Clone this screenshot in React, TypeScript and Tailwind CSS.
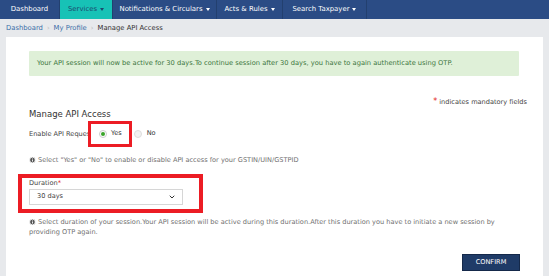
import { ChevronDown, Info } from "lucide-react";

const navItems = [
  { label: "Dashboard", caret: false, w: "w-[60px]" },
  { label: "Services", caret: true, w: "w-[53px]", active: true },
  { label: "Notifications & Circulars", caret: true, w: "w-[104px]" },
  { label: "Acts & Rules", caret: true, w: "w-[66px]" },
  { label: "Search Taxpayer", caret: true, w: "w-[84px]" },
];

function Caret() {
  return <span className="ml-[3px] inline-block h-0 w-0 border-x-[2.5px] border-t-[3px] border-x-transparent border-t-current align-middle" />;
}

function HelpText({ children }: { children: React.ReactNode }) {
  return (
    <p className="text-[6.6px] leading-[10px] text-[#707070]">
      <Info className="mr-[2px] inline-block h-[7px] w-[7px] -translate-y-[0.5px] fill-[#555] text-white" strokeWidth={3} />
      {children}
    </p>
  );
}

export default function App() {
  return (
    <div className="flex h-[276px] w-[549px] flex-col overflow-hidden bg-[#e7e9ec]" style={{ fontFamily: '"DejaVu Sans", Verdana, sans-serif' }}>
      {/* top nav */}
      <nav className="flex h-[19px] shrink-0 bg-[#2b4c85] text-[6.9px] text-white">
        {navItems.map((n) => (
          <div
            key={n.label}
            className={`flex ${n.w} items-center justify-center border-r border-[#23406f] ${n.active ? "bg-[#17c2b6] text-[#1c4a6e]" : ""}`}
          >
            {n.label}
            {n.caret && <Caret />}
          </div>
        ))}
      </nav>

      {/* breadcrumb */}
      <div className="flex h-[18px] shrink-0 items-center gap-[4px] px-[6px] text-[6.8px]">
        <span className="text-[#3b6fa8]">Dashboard</span>
        <span className="text-[#bbb]">›</span>
        <span className="text-[#3b6fa8]">My Profile</span>
        <span className="text-[#bbb]">›</span>
        <span className="text-[#333]">Manage API Access</span>
      </div>

      <div className="flex-1 px-[6px]">
        <div className="relative h-full bg-white pl-[23px] pr-[16px] pt-[14px]">
          <div className="flex h-[25px] w-[490px] items-center rounded-[1px] bg-[#dff0d8] pl-[8px] text-[6.7px] text-[#3c763d]">
            Your API session will now be active for 30 days.To continue session after 30 days, you have to again authenticate using OTP.
          </div>

          <p className="mt-[21px] text-right text-[6.6px] leading-[10px] text-[#444]">
            <span className="text-[8px] text-[#e2231a]">*</span> indicates mandatory fields
          </p>

          <h2 className="mt-[1px] text-[8.5px] leading-[12px] text-[#333]">Manage API Access</h2>

          <div className="mt-[10px] flex h-[10px] items-center text-[6.6px] text-[#444]">
            <span>Enable API Requests</span>
          </div>

          <div className="mt-[15px]">
            <HelpText>Select "Yes" or "No" to enable or disable API access for your GSTIN/UIN/GSTPID</HelpText>
          </div>

          <label className="mt-[13px] block text-[6.6px] leading-[10px] text-[#444]">
            Duration<span className="text-[#e2231a]">*</span>
          </label>
          <div className="mt-[1px] flex h-[16px] w-[154px] items-center justify-between border border-[#d6d6d6] pl-[7px] pr-[6px] text-[6.6px] text-[#444]">
            30 days
            <ChevronDown className="h-[8px] w-[8px] text-[#333]" strokeWidth={3} />
          </div>

          <div className="mt-[12px]">
            <HelpText>
              Select duration of your session.Your API session will be active during this duration.After this duration you have to initiate a new session by
              <br />
              providing OTP again.
            </HelpText>
          </div>

          <div className="mt-[17px] flex w-[491px] justify-end">
            <button className="flex h-[17px] w-[58px] items-center justify-center border border-[#15294a] bg-[#1f3b67] text-[6.6px] text-white">
              CONFIRM
            </button>
          </div>

          {/* annotation boxes */}
          <div className="absolute left-[82px] top-[84px] h-[26px] w-[44px] border-[3px] border-[#ec1c24] bg-white" />
          <div className="pointer-events-none absolute left-[12px] top-[137px] h-[39px] w-[185px] border-[4px] border-[#ec1c24]" />

          {/* radio group overlapping the label */}
          <div className="absolute left-[93px] top-[92px] flex h-[10px] items-center text-[6.6px] text-[#333]">
            <span className="flex h-[8px] w-[8px] items-center justify-center rounded-full border border-[#ccc] bg-white">
              <span className="h-[4px] w-[4px] rounded-full bg-[#3aa52a]" />
            </span>
            <span className="ml-[4px]">Yes</span>
            <span className="ml-[12px] h-[8px] w-[8px] rounded-full border border-[#ddd] bg-[#f2f2f2]" />
            <span className="ml-[5px]">No</span>
          </div>
        </div>
      </div>
    </div>
  );
}
